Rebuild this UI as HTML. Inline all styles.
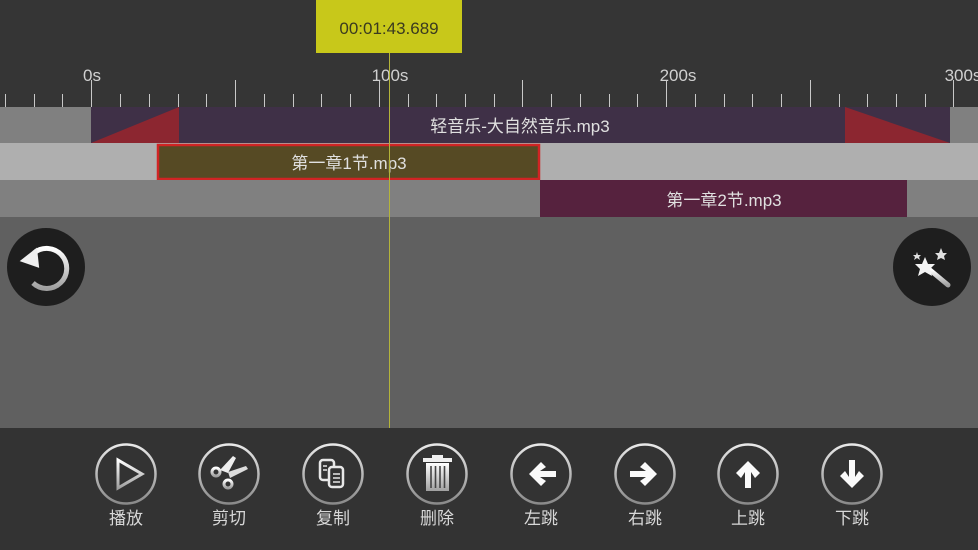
<!DOCTYPE html>
<html><head><meta charset="utf-8"><style>
html,body{margin:0;padding:0;background:#353535;overflow:hidden}
svg{display:block}
text{font-family:"Liberation Sans","Noto Sans CJK SC",sans-serif}
</style></head><body>
<svg width="978" height="550" viewBox="0 0 978 550" xmlns="http://www.w3.org/2000/svg">
<defs>
<linearGradient id="ring" x1="0" y1="0" x2="0" y2="1"><stop offset="0" stop-color="#e8e8e8"/><stop offset="1" stop-color="#8a8a8a"/></linearGradient>
<linearGradient id="met" x1="0" y1="0" x2="0" y2="1"><stop offset="0" stop-color="#ffffff"/><stop offset="1" stop-color="#a0a0a0"/></linearGradient>
</defs>
<rect width="978" height="550" fill="#353535"/>
<g stroke="#c8c8c8" stroke-width="1">
<path d="M5.5 94V107M34.5 94V107M62.5 94V107M91.5 80V107M120.5 94V107M149.5 94V107M178.5 94V107M206.5 94V107M235.5 80V107M264.5 94V107M293.5 94V107M321.5 94V107M350.5 94V107M379.5 80V107M408.5 94V107M436.5 94V107M465.5 94V107M494.5 94V107M522.5 80V107M551.5 94V107M580.5 94V107M609.5 94V107M637.5 94V107M666.5 80V107M695.5 94V107M724.5 94V107M752.5 94V107M781.5 94V107M810.5 80V107M839.5 94V107M867.5 94V107M896.5 94V107M925.5 94V107M953.5 80V107"/>
</g>
<g fill="#d0d0d0" font-size="17" text-anchor="middle">
<text x="92" y="81">0s</text><text x="390" y="81">100s</text><text x="678" y="81">200s</text><text x="963" y="81">300s</text>
</g>
<rect x="0" y="107" width="978" height="36" fill="#808080"/>
<rect x="91" y="107" width="859" height="36" fill="#3f3047"/>
<polygon points="91,143 179,107 179,143" fill="#8c2630"/>
<polygon points="845,107 845,143 950,143" fill="#8c2630"/>
<text x="520" y="132" font-size="17" fill="#e0e0e0" text-anchor="middle">轻音乐-大自然音乐.mp3</text>
<rect x="0" y="143" width="978" height="37" fill="#afafaf"/>
<rect x="158" y="145" width="381" height="34" fill="#564a24" stroke="#d02424" stroke-width="2.5"/>
<text x="349" y="169" font-size="17" fill="#e0e0e0" text-anchor="middle">第一章1节.mp3</text>
<rect x="0" y="180" width="978" height="37" fill="#808080"/>
<rect x="540" y="180" width="367" height="37" fill="#56223e"/>
<text x="724" y="206" font-size="17" fill="#e0e0e0" text-anchor="middle">第一章2节.mp3</text>
<rect x="0" y="217" width="978" height="211" fill="#606060"/>
<rect x="389" y="53" width="1" height="375" fill="#b4b43a"/>
<rect x="316" y="0" width="146" height="53" fill="#c8c81a"/>
<text x="389" y="34" font-size="17" fill="#3a3a20" text-anchor="middle">00:01:43.689</text>
<circle cx="46" cy="267" r="39" fill="#1e1e1e"/>
<path d="M34 253 A20 20 0 1 1 33 283" fill="none" stroke="url(#met)" stroke-width="5"/>
<polygon points="20,262 36,247 40,267" fill="#f0f0f0" transform="rotate(5 30 258)"/>
<circle cx="932" cy="267" r="39" fill="#1e1e1e"/>
<line x1="930" y1="270" x2="948" y2="285" stroke="url(#met)" stroke-width="5" stroke-linecap="round"/>
<polygon points="925,257 928,264 935,264 930,269 932,276 925,272 918,276 920,269 915,264 922,264" fill="#f4f4f4"/>
<polygon points="941,248 943,253 947,253 944,256 945,260 941,258 937,260 938,256 935,253 939,253" fill="#e0e0e0"/>
<polygon points="917,252 918,255 921,255 919,257 920,260 917,258 914,260 915,257 913,255 916,255" fill="#e0e0e0"/>
<rect x="0" y="428" width="978" height="122" fill="#333333"/>
<g fill="none" stroke="url(#ring)" stroke-width="2.5">
<circle cx="126" cy="474" r="29.5"/><circle cx="229" cy="474" r="29.5"/><circle cx="333" cy="474" r="29.5"/><circle cx="437" cy="474" r="29.5"/>
<circle cx="541" cy="474" r="29.5"/><circle cx="645" cy="474" r="29.5"/><circle cx="748" cy="474" r="29.5"/><circle cx="852" cy="474" r="29.5"/>
</g>
<polygon points="118,460 142,474 118,488" fill="none" stroke="url(#met)" stroke-width="3"/>
<g stroke="url(#met)" fill="none" stroke-width="3">
<circle cx="216" cy="472" r="4"/><circle cx="228" cy="484" r="4"/>
</g>
<polygon points="220,470 233,456 236,458 228,473" fill="#eee"/>
<polygon points="228,472 246,466 248,469 230,478" fill="#ddd"/>
<g stroke="#e8e8e8" stroke-width="2.5" fill="#333">
<rect x="320" y="460" width="14" height="20" rx="3"/>
<rect x="329" y="467" width="14" height="20" rx="3"/>
</g>
<g stroke="#e8e8e8" stroke-width="1.5"><path d="M333 474H340M333 478H340M333 482H340M323 466H327M323 470H327"/></g>
<rect x="423" y="458" width="29" height="4" fill="#f0f0f0"/>
<rect x="432" y="455" width="11" height="3" fill="#f0f0f0"/>
<rect x="426" y="463" width="23" height="28" fill="url(#met)"/>
<g stroke="#444" stroke-width="1.6"><path d="M431 466V488M435.5 466V488M440 466V488M444.5 466V488"/></g>
<path d="M529 474L541 462L546 467L540 471H556V477H540L546 481L541 486Z" fill="#fafafa"/>
<path d="M657 474L645 462L640 467L646 471H630V477H646L640 481L645 486Z" fill="#fafafa"/>
<path d="M748 461L760 473L755 478L751 472V488H745V472L741 478L736 473Z" fill="#fafafa"/>
<path d="M852 488L864 476L859 471L855 477V460H849V477L845 471L840 476Z" fill="#fafafa"/>
<g fill="#d8d8d8" font-size="17" text-anchor="middle">
<text x="126" y="524">播放</text><text x="229" y="524">剪切</text><text x="333" y="524">复制</text><text x="437" y="524">删除</text>
<text x="541" y="524">左跳</text><text x="645" y="524">右跳</text><text x="748" y="524">上跳</text><text x="852" y="524">下跳</text>
</g>
</svg>
</body></html>
